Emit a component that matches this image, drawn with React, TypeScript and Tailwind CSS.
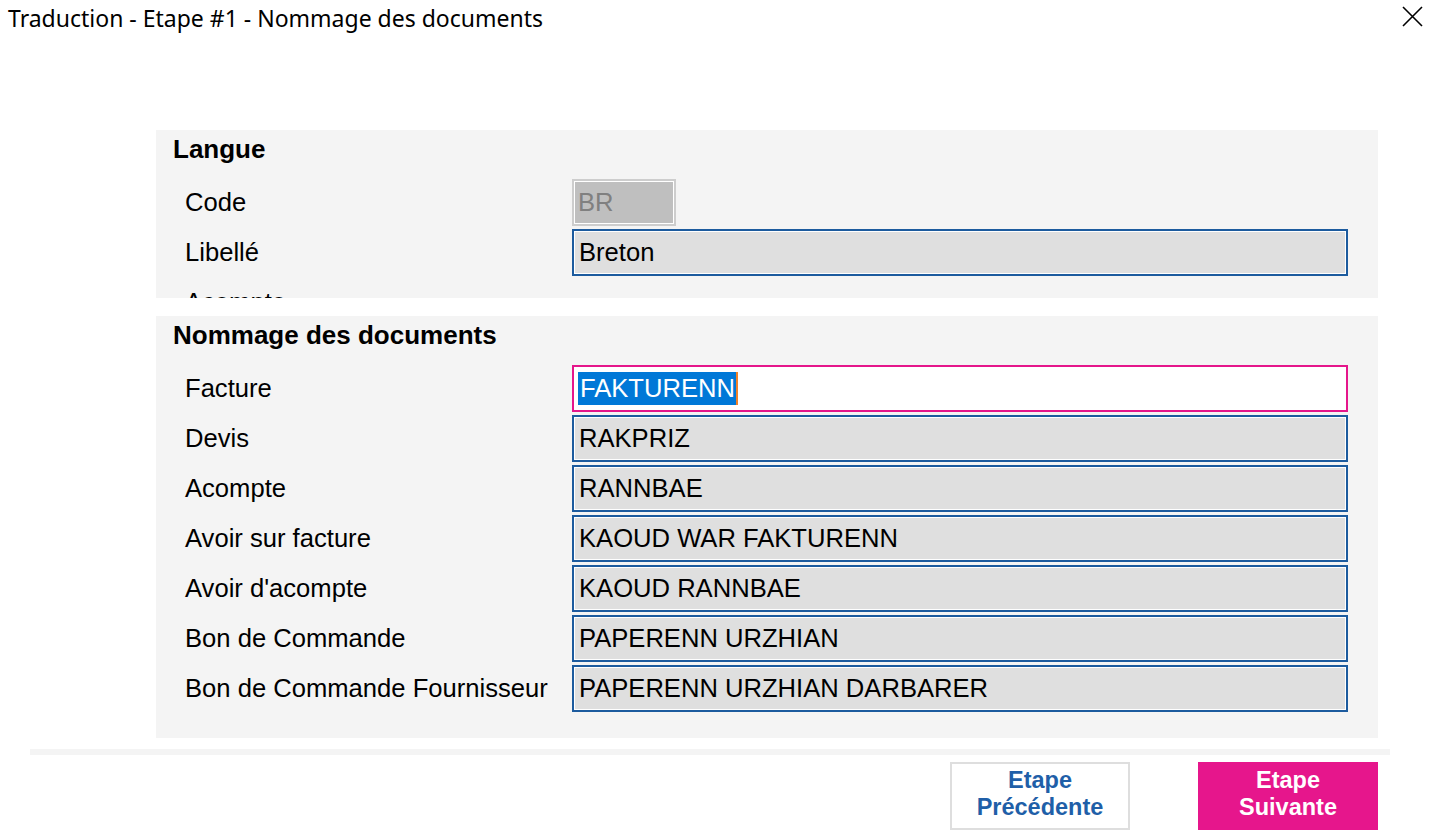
const langueRows = [
  { label: "Code", value: "BR", kind: "disabled" },
  { label: "Libellé", value: "Breton", kind: "normal" },
  { label: "Acompte", value: "", kind: "hidden" },
];

const docRows = [
  { label: "Facture", value: "FAKTURENN", kind: "focused" },
  { label: "Devis", value: "RAKPRIZ", kind: "normal" },
  { label: "Acompte", value: "RANNBAE", kind: "normal" },
  { label: "Avoir sur facture", value: "KAOUD WAR FAKTURENN", kind: "normal" },
  { label: "Avoir d'acompte", value: "KAOUD RANNBAE", kind: "normal" },
  { label: "Bon de Commande", value: "PAPERENN URZHIAN", kind: "normal" },
  { label: "Bon de Commande Fournisseur", value: "PAPERENN URZHIAN DARBARER", kind: "normal" },
];

const Field = ({ value, kind }: { value: string; kind: string }) => {
  if (kind === "disabled") {
    return (
      <div className="w-[104px] h-[47px] border-2 border-[#cdcdcd] p-px bg-white">
        <div className="h-full bg-[#bfbfbf] flex items-center pl-[3px] text-[#808080]">{value}</div>
      </div>
    );
  }
  if (kind === "focused") {
    return (
      <div className="w-[776px] h-[47px] border-2 border-[#e5168b] p-px bg-white">
        <div className="h-full bg-white flex items-center pl-[3px]">
          <span className="bg-[#0078d7] text-white pl-[2px] pr-px leading-[33px]">{value}</span>
          <span className="w-[2px] h-[33px] bg-[#f0822a]"></span>
        </div>
      </div>
    );
  }
  if (kind === "hidden") return null;
  return (
    <div className="w-[776px] h-[47px] border-2 border-[#1c5b9e] p-px bg-white">
      <div className="h-full bg-[#dfdfdf] flex items-center pl-[4px] text-black">{value}</div>
    </div>
  );
};

const Section = ({
  title,
  rows,
  height,
}: {
  title: string;
  rows: { label: string; value: string; kind: string }[];
  height: string;
}) => (
  <div className={`ml-[156px] w-[1222px] bg-[#f4f4f4] overflow-hidden pt-[4px] ${height}`}>
    <div className="pl-[17px] h-[30px] leading-[30px] text-[26px] font-bold text-black">{title}</div>
    <div className="mt-[13px] flex flex-col">
      {rows.map((r) => (
        <div key={r.label} className="h-[50px] flex items-center">
          <div className="w-[416px] pl-[29px] text-black whitespace-nowrap">{r.label}</div>
          <Field value={r.value} kind={r.kind} />
        </div>
      ))}
    </div>
  </div>
);

export default function App() {
  return (
    <div
      className="w-[1431px] h-[835px] bg-white overflow-hidden text-[25.6px]"
      style={{ fontFamily: '"Liberation Sans", Arial, sans-serif' }}
    >
      <div className="h-[36px] flex items-center justify-between pl-[8px] pr-[8px]">
        <span
          className="text-[23px] text-black leading-[34px]"
          style={{ fontFamily: '"Noto Sans", "Open Sans", sans-serif' }}
        >
          Traduction - Etape #1 - Nommage des documents
        </span>
        <svg width="21" height="21" viewBox="0 0 21 21" className="-mt-[3px]">
          <path d="M1 1 L20 20 M20 1 L1 20" stroke="#000" strokeWidth="1.6" fill="none" />
        </svg>
      </div>

      <div className="mt-[94px]">
        <Section title="Langue" rows={langueRows} height="h-[168px]" />
      </div>
      <div className="mt-[18px]">
        <Section title="Nommage des documents" rows={docRows} height="h-[422px]" />
      </div>

      <div className="mt-[11px] ml-[30px] w-[1360px] h-[6px] bg-[#f4f4f4]"></div>

      <div className="mt-[7px] flex justify-end pr-[53px] gap-[68px]">
        <button className="w-[180px] h-[68px] pb-[5px] border-2 border-[#dedede] bg-white text-[#1f5fa8] font-bold text-[23.5px] leading-[27px] flex flex-col items-center justify-center">
          <span>Etape</span>
          <span>Précédente</span>
        </button>
        <button className="w-[180px] h-[68px] pb-[5px] bg-[#e6168c] text-white font-bold text-[23.5px] leading-[27px] flex flex-col items-center justify-center">
          <span>Etape</span>
          <span>Suivante</span>
        </button>
      </div>
    </div>
  );
}
